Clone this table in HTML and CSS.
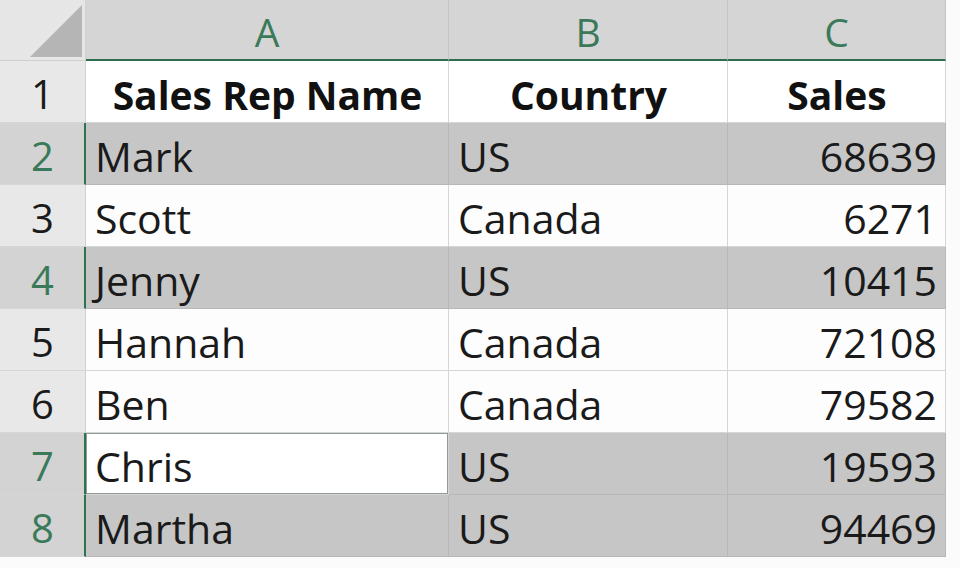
FILE: index.html
```html
<!DOCTYPE html>
<html>
<head>
<meta charset="utf-8">
<link rel="stylesheet" href="styles.css">
</head>
<body>
<div class="sheet">
  <div class="corner"><svg width="86" height="61" viewBox="0 0 86 61"><polygon points="30,57 82,5 82,57" fill="#b5b5b5"/></svg></div>
  <div class="colhead">A</div>
  <div class="colhead">B</div>
  <div class="colhead">C</div>

  <div class="rowhead">1</div>
  <div class="cell head">Sales Rep Name</div>
  <div class="cell head">Country</div>
  <div class="cell head">Sales</div>

  <div class="rowhead sel">2</div>
  <div class="cell selcell">Mark</div>
  <div class="cell selcell">US</div>
  <div class="cell selcell num">68639</div>

  <div class="rowhead">3</div>
  <div class="cell">Scott</div>
  <div class="cell">Canada</div>
  <div class="cell num">6271</div>

  <div class="rowhead sel">4</div>
  <div class="cell selcell">Jenny</div>
  <div class="cell selcell">US</div>
  <div class="cell selcell num">10415</div>

  <div class="rowhead">5</div>
  <div class="cell">Hannah</div>
  <div class="cell">Canada</div>
  <div class="cell num">72108</div>

  <div class="rowhead">6</div>
  <div class="cell">Ben</div>
  <div class="cell">Canada</div>
  <div class="cell num">79582</div>

  <div class="rowhead sel">7</div>
  <div class="cell active">Chris</div>
  <div class="cell selcell">US</div>
  <div class="cell selcell num">19593</div>

  <div class="rowhead sel">8</div>
  <div class="cell selcell">Martha</div>
  <div class="cell selcell">US</div>
  <div class="cell selcell num">94469</div>
</div>
</body>
</html>
```
FILE: styles.css
```css
html, body {
  margin: 0;
  padding: 0;
  background: #fbfbfb;
}
body {
  width: 960px;
  height: 568px;
  overflow: hidden;
  font-family: "Open Sans", "Liberation Sans", sans-serif;
}
.sheet {
  display: grid;
  grid-template-columns: 86px 363px 279px 218px;
  grid-template-rows: 61px repeat(8, 62px);
  width: 946px;
}
.corner {
  background: #e6e6e6;
  border-right: 1px solid #d2d2d2;
  border-bottom: 1px solid #cfcfcf;
  box-sizing: border-box;
  overflow: hidden;
}
.corner svg {
  display: block;
}
.colhead {
  background: #d5d5d5;
  color: #3a7a5a;
  font-size: 39px;
  display: flex;
  align-items: center;
  justify-content: center;
  border-right: 1px solid #c4c4c4;
  border-bottom: 2px solid #2e6e4e;
  box-sizing: border-box;
  padding-top: 4px;
  line-height: 1;
}
.rowhead {
  background: #e8e8e8;
  color: #1a1a1a;
  font-size: 40px;
  display: flex;
  align-items: center;
  justify-content: center;
  border-right: 1px solid #d0d0d0;
  border-bottom: 1px solid #d6d6d6;
  box-sizing: border-box;
  padding-top: 4px;
  line-height: 1;
}
.rowhead.sel {
  background: #d3d3d3;
  color: #3a7a5a;
  border-right: 2px solid #2e7350;
  padding-left: 1px;
}
.cell {
  background: #fdfdfd;
  color: #1a1a1a;
  font-size: 41px;
  display: flex;
  align-items: center;
  padding: 5px 8px 0 9px;
  border-right: 1px solid #d6d6d6;
  border-bottom: 1px solid #d6d6d6;
  box-sizing: border-box;
  white-space: nowrap;
  line-height: 1;
}
.cell.head {
  font-weight: 700;
  font-size: 39px;
  justify-content: center;
  color: #111;
  background: #ffffff;
}
.cell.num {
  justify-content: flex-end;
}
.cell.selcell {
  background: #c6c6c6;
  border-right-color: #b8b8b8;
  border-bottom-color: #b8b8b8;
}
.cell.active {
  background: #ffffff;
  box-shadow: inset 0 0 0 1px #8e9a93;
}
```
